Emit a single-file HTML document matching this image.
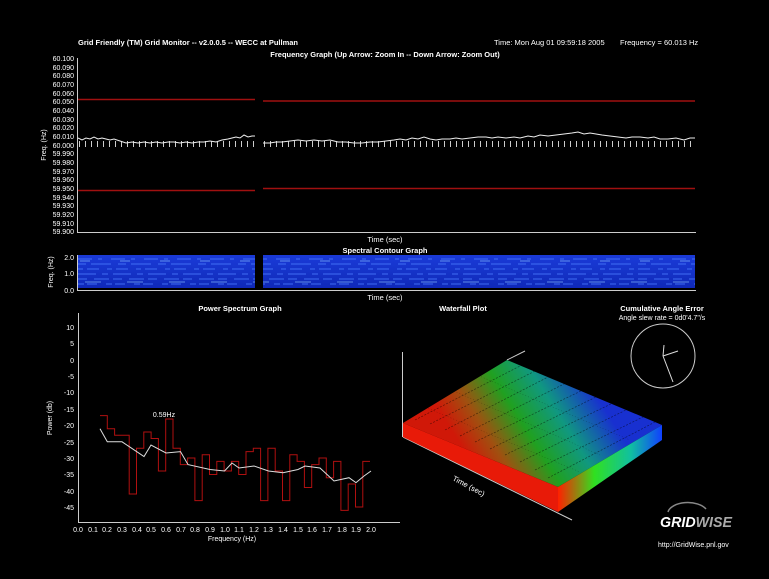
<!DOCTYPE html>
<html><head><meta charset="utf-8"><style>
html,body{margin:0;padding:0;background:#000;}
svg{display:block;font-family:"Liberation Sans","DejaVu Sans",sans-serif;}
</style></head><body>
<svg width="769" height="579" viewBox="0 0 769 579" xmlns="http://www.w3.org/2000/svg">
<defs>
<linearGradient id="spec" x1="0" y1="0" x2="0" y2="1">
<stop offset="0" stop-color="#1a3ad8"/><stop offset="0.5" stop-color="#1533c8"/><stop offset="1" stop-color="#0f28b8"/>
</linearGradient>
<linearGradient id="top" gradientUnits="userSpaceOnUse" x1="470" y1="460" x2="590" y2="385">
<stop offset="0" stop-color="#d01808"/><stop offset="0.2" stop-color="#a05010"/><stop offset="0.45" stop-color="#20a020"/><stop offset="0.7" stop-color="#109880"/><stop offset="1" stop-color="#1830d0"/>
</linearGradient>
<linearGradient id="side" gradientUnits="userSpaceOnUse" x1="558" y1="0" x2="662" y2="0">
<stop offset="0" stop-color="#ff2000"/><stop offset="0.35" stop-color="#30e020"/><stop offset="0.7" stop-color="#10c0a0"/><stop offset="1" stop-color="#1040ff"/>
</linearGradient>
</defs>
<g fill="#fff" font-size="7.5">
<text x="78" y="45" font-weight="bold">Grid Friendly (TM) Grid Monitor -- v2.0.0.5 -- WECC at Pullman</text>
<text x="494" y="45">Time: Mon Aug 01 09:59:18 2005</text>
<text x="620" y="45">Frequency = 60.013 Hz</text>
<text x="385" y="57" text-anchor="middle" font-weight="bold">Frequency Graph (Up Arrow: Zoom In  --  Down Arrow: Zoom Out)</text>
</g>
<g fill="#fff" font-size="7" text-anchor="end">
<text x="74" y="61">60.100</text><text x="74" y="70">60.090</text><text x="74" y="78">60.080</text><text x="74" y="87">60.070</text><text x="74" y="96">60.060</text><text x="74" y="104">60.050</text><text x="74" y="113">60.040</text><text x="74" y="122">60.030</text><text x="74" y="130">60.020</text><text x="74" y="139">60.010</text><text x="74" y="148">60.000</text><text x="74" y="156">59.990</text><text x="74" y="165">59.980</text><text x="74" y="174">59.970</text><text x="74" y="182">59.960</text><text x="74" y="191">59.950</text><text x="74" y="200">59.940</text><text x="74" y="208">59.930</text><text x="74" y="217">59.920</text><text x="74" y="226">59.910</text><text x="74" y="234">59.900</text>
</g>
<text x="46" y="145" fill="#fff" font-size="7" text-anchor="middle" transform="rotate(-90 46 145)">Freq. (Hz)</text>
<g stroke="#ccc" stroke-width="1"><line x1="77.5" y1="58" x2="77.5" y2="232"/><line x1="77" y1="232.5" x2="696" y2="232.5"/></g>
<g stroke="#a01010" stroke-width="1.5"><line x1="78" y1="99.5" x2="255" y2="99.5"/><line x1="263" y1="101" x2="695" y2="101"/><line x1="78" y1="190.5" x2="255" y2="190.5"/><line x1="263" y1="188.5" x2="695" y2="188.5"/></g>
<g stroke="#ccc" stroke-width="6" stroke-dasharray="1 5"><line x1="79" y1="144" x2="255" y2="144"/><line x1="264" y1="144" x2="695" y2="144"/></g>
<polyline fill="none" stroke="#eee" stroke-width="1" points="78,138 82,140 86,138 90,139 94,137 98,139 102,138 106,139 110,140 114,139 120,141 126,143 132,142 138,143 144,142 150,143 156,142 162,143 168,142 174,142 180,143 186,142 192,143 198,142 204,142 210,141 216,142 222,140 228,139 232,138 236,137 240,138 244,135 248,137 252,136 255,136"/>
<polyline fill="none" stroke="#eee" stroke-width="1" points="263,143 270,143 276,142 282,142 290,141 298,140 306,141 314,140 322,141 330,140 338,142 346,142 354,143 362,143 370,142 378,142 386,141 394,140 400,139 406,140 412,138 418,139 424,137 430,139 436,140 442,139 450,139 456,138 462,139 470,138 478,137 486,137 492,138 498,137 506,138 514,137 520,138 528,136 534,137 540,135 548,136 556,135 564,134 572,133 578,132 584,134 590,133 596,134 602,135 610,136 618,137 626,138 632,137 640,137 648,138 654,137 660,139 668,139 676,138 684,140 690,138 695,138"/>
<text x="385" y="242" fill="#fff" font-size="7.5" text-anchor="middle">Time (sec)</text>
<text x="385" y="253" fill="#fff" font-size="7.5" text-anchor="middle" font-weight="bold">Spectral Contour Graph</text>
<rect x="78" y="255" width="177" height="33" fill="url(#spec)"/>
<rect x="263" y="255" width="432" height="33" fill="url(#spec)"/>
<g stroke="#4a7cff" stroke-width="1" opacity="0.8">
<line x1="78" y1="259" x2="695" y2="259" stroke-dasharray="14 6 4 9"/>
<line x1="78" y1="264" x2="695" y2="264" stroke-dasharray="8 5 20 7"/>
<line x1="78" y1="269" x2="695" y2="269" stroke-dasharray="5 4 12 8"/>
<line x1="78" y1="274" x2="695" y2="274" stroke-dasharray="18 6 6 5"/>
<line x1="78" y1="279" x2="695" y2="279" stroke-dasharray="9 7 15 4"/>
<line x1="78" y1="284" x2="695" y2="284" stroke-dasharray="6 3 10 9"/>
</g>
<g stroke="#90c8ff" stroke-width="1" opacity="0.6">
<line x1="80" y1="261" x2="695" y2="261" stroke-dasharray="10 30"/>
<line x1="85" y1="282" x2="695" y2="282" stroke-dasharray="16 26"/>
</g>
<rect x="255" y="255" width="8" height="33" fill="#000"/>
<g stroke="#ccc"><line x1="77.5" y1="255" x2="77.5" y2="290"/><line x1="77" y1="290.5" x2="696" y2="290.5"/></g>
<g fill="#fff" font-size="7" text-anchor="end"><text x="74" y="260">2.0</text><text x="74" y="276">1.0</text><text x="74" y="293">0.0</text></g>
<text x="53" y="272" fill="#fff" font-size="7" text-anchor="middle" transform="rotate(-90 53 272)">Freq. (Hz)</text>
<text x="385" y="300" fill="#fff" font-size="7.5" text-anchor="middle">Time (sec)</text>
<text x="240" y="311" fill="#fff" font-size="7.5" text-anchor="middle" font-weight="bold">Power Spectrum Graph</text>
<g stroke="#ccc"><line x1="78.5" y1="313" x2="78.5" y2="522"/><line x1="78" y1="522.5" x2="400" y2="522.5"/></g>
<g fill="#fff" font-size="7" text-anchor="end">
<text x="74" y="330">10</text><text x="74" y="346">5</text><text x="74" y="363">0</text><text x="74" y="379">-5</text><text x="74" y="395">-10</text><text x="74" y="412">-15</text><text x="74" y="428">-20</text><text x="74" y="445">-25</text><text x="74" y="461">-30</text><text x="74" y="477">-35</text><text x="74" y="494">-40</text><text x="74" y="510">-45</text>
</g>
<text x="52" y="418" fill="#fff" font-size="7" text-anchor="middle" transform="rotate(-90 52 418)">Power (db)</text>
<g fill="#fff" font-size="7" text-anchor="middle">
<text x="78" y="532">0.0</text><text x="93" y="532">0.1</text><text x="107" y="532">0.2</text><text x="122" y="532">0.3</text><text x="137" y="532">0.4</text><text x="151" y="532">0.5</text><text x="166" y="532">0.6</text><text x="181" y="532">0.7</text><text x="195" y="532">0.8</text><text x="210" y="532">0.9</text><text x="225" y="532">1.0</text><text x="239" y="532">1.1</text><text x="254" y="532">1.2</text><text x="268" y="532">1.3</text><text x="283" y="532">1.4</text><text x="298" y="532">1.5</text><text x="312" y="532">1.6</text><text x="327" y="532">1.7</text><text x="342" y="532">1.8</text><text x="356" y="532">1.9</text><text x="371" y="532">2.0</text>
<text x="232" y="541">Frequency (Hz)</text>
</g>
<path fill="none" stroke="#b01010" stroke-width="1" d="M100,415.6 H107.3 V428.7 H114.6 V435.2 H129.2 V494 H136.5 V448.3 H143.8 V432 H151.1 V438.5 H158.4 V471 H165.7 V419 H173 V448.3 H180.3 V464.6 H187.6 V458 H194.9 V500.6 H202.2 V454.8 H209.5 V474.5 H216.8 V461.4 H224.1 V471 H231.4 V461.4 H238.7 V474.5 H246 V451.6 H253.3 V448.3 H260.6 V500.6 H267.9 V448.3 H275.2 V471 H282.5 V500.6 H289.8 V454.8 H297.1 V461.4 H304.4 V487.5 H311.7 V464.6 H319 V458 H326.3 V477.7 H333.6 V461.4 H340.9 V510.4 H348.2 V484 H355.5 V507 H362.8 V461.4 H370"/>
<polyline fill="none" stroke="#ddd" stroke-width="1" points="100,428.7 107.3,441.8 122,441.8 144,456.5 151,445 166,453 180.5,451.6 188,464.6 210,469.5 224.5,471 232,463 239,468 254,466 268.5,471 283,472.8 298,469.5 305,466 320,468 334,481 349,477.7 356,482.6 364,476 371,471"/>
<text x="164" y="417" fill="#fff" font-size="7" text-anchor="middle">0.59Hz</text>
<text x="463" y="311" fill="#fff" font-size="7.5" text-anchor="middle" font-weight="bold">Waterfall Plot</text>
<g stroke="#ccc"><line x1="402.5" y1="352" x2="402.5" y2="437"/><line x1="403" y1="437" x2="572" y2="520"/><line x1="507" y1="360" x2="525" y2="351"/></g>
<polygon points="403,423 507,360 662,425 558,487" fill="url(#top)"/>
<polygon points="403,423 558,487 558,512 403,437" fill="#e81a08"/>
<polygon points="558,487 662,425 662,440 558,512" fill="url(#side)"/>
<g stroke="#000" stroke-width="0.7" opacity="0.5" stroke-dasharray="2 1.5">
<line x1="415" y1="420" x2="520" y2="366"/><line x1="430" y1="424" x2="535" y2="371"/><line x1="445" y1="430" x2="550" y2="376"/><line x1="460" y1="436" x2="568" y2="382"/><line x1="475" y1="442" x2="585" y2="389"/><line x1="490" y1="449" x2="600" y2="395"/><line x1="505" y1="455" x2="615" y2="402"/><line x1="520" y1="462" x2="630" y2="408"/><line x1="535" y1="470" x2="645" y2="416"/><line x1="548" y1="478" x2="655" y2="422"/>
</g>
<g stroke="#000" stroke-width="0.5" opacity="0.35" stroke-dasharray="1 2">
<line x1="440" y1="385" x2="600" y2="455"/><line x1="470" y1="372" x2="630" y2="440"/><line x1="420" y1="405" x2="580" y2="472"/>
</g>
<text x="452" y="480" fill="#fff" font-size="7.5" transform="rotate(28 452 480)">Time (sec)</text>
<text x="662" y="311" fill="#fff" font-size="7.5" text-anchor="middle" font-weight="bold">Cumulative Angle Error</text>
<text x="662" y="320" fill="#fff" font-size="7" text-anchor="middle">Angle slew rate = 0d0'4.7"/s</text>
<circle cx="663" cy="356" r="32" fill="none" stroke="#ccc" stroke-width="1"/>
<g stroke="#ddd" stroke-width="1"><line x1="663" y1="356" x2="673" y2="382"/><line x1="663" y1="356" x2="664" y2="345"/><line x1="663" y1="356" x2="678" y2="351"/></g>
<path d="M668,512 A20,11 0 0 1 706,509" fill="none" stroke="#888" stroke-width="1.5"/>
<text x="660" y="527" font-size="15" font-weight="bold" font-style="italic" fill="#fff" textLength="72" lengthAdjust="spacingAndGlyphs">GRID<tspan fill="#aaa">WISE</tspan></text>
<text x="658" y="547" font-size="7" fill="#fff">http://GridWise.pnl.gov</text>
</svg>
</body></html>
